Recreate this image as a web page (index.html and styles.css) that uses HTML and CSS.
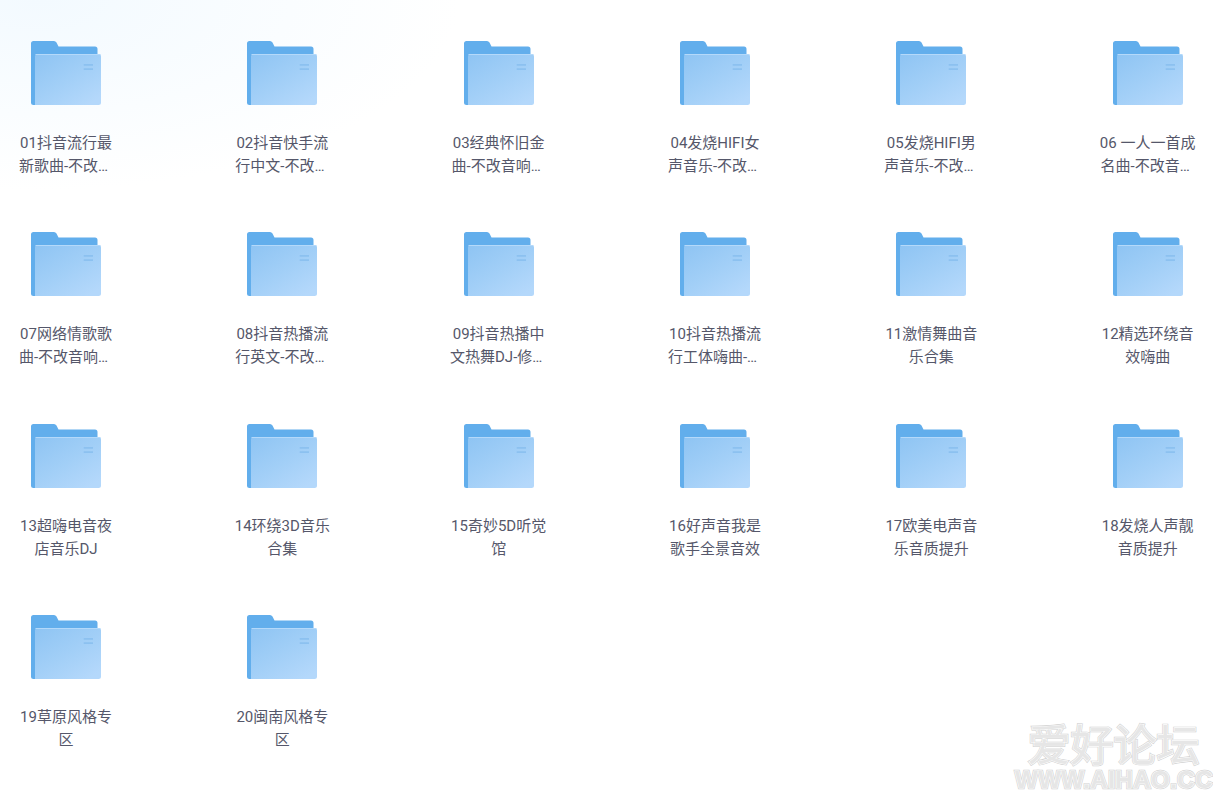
FILE: index.html
```html
<!DOCTYPE html>
<html lang="en">
<head>
    <meta charset="UTF-8">
    <meta name="viewport" content="width=device-width, initial-scale=1.0">
    <title>Folders</title>
    <link rel="stylesheet" href="styles.css">
</head>
<body>

    <svg class="defs" width="0" height="0">
        <defs>
            <linearGradient id="front-fill" x1="0" y1="0" x2="0.8" y2="1">
                <stop offset="0" stop-color="#8ec4f3"/>
                <stop offset="0.55" stop-color="#a2cff7"/>
                <stop offset="1" stop-color="#b4d8fb"/>
            </linearGradient>
            <symbol id="folder" viewBox="0 0 70 64">
                <path d="M2.500 0H23Q24.500 0 25.500 1.500L27.500 5.500H64Q66.500 5.500 66.500 8V20H4V64H2.500Q0 64 0 61.500V2.500Q0 0 2.500 0Z" fill="#62aeec"/>
                <path d="M4 64V15.500Q4 13 6.500 13H67.500Q70 13 70 15.500V61.500Q70 64 67.500 64Z" fill="url(#front-fill)"/>
                <path d="M4.500 13.500H69.500" stroke="#b4d9fa" stroke-width="1" fill="none"/>
                <path d="M52.700 23H62V24.800H52.700ZM52.700 27.200H62V29H52.700Z" fill="#8cc1f0"/>
            </symbol>
        </defs>
    </svg>

    <div class="file-grid">
        <div class="file-item">
            <svg class="folder-icon"><use href="#folder"/></svg>
            <p class="file-name">01抖音流行最新歌曲-不改音响设置</p>
        </div>
        <div class="file-item">
            <svg class="folder-icon"><use href="#folder"/></svg>
            <p class="file-name">02抖音快手流行中文-不改音响设置</p>
        </div>
        <div class="file-item">
            <svg class="folder-icon"><use href="#folder"/></svg>
            <p class="file-name">03经典怀旧金曲-不改音响设置</p>
        </div>
        <div class="file-item">
            <svg class="folder-icon"><use href="#folder"/></svg>
            <p class="file-name">04发烧HIFI女声音乐-不改音响设置</p>
        </div>
        <div class="file-item">
            <svg class="folder-icon"><use href="#folder"/></svg>
            <p class="file-name">05发烧HIFI男声音乐-不改音响设置</p>
        </div>
        <div class="file-item">
            <svg class="folder-icon"><use href="#folder"/></svg>
            <p class="file-name">06 一人一首成名曲-不改音响设置</p>
        </div>
        <div class="file-item">
            <svg class="folder-icon"><use href="#folder"/></svg>
            <p class="file-name">07网络情歌歌曲-不改音响设置</p>
        </div>
        <div class="file-item">
            <svg class="folder-icon"><use href="#folder"/></svg>
            <p class="file-name">08抖音热播流行英文-不改音响设置</p>
        </div>
        <div class="file-item">
            <svg class="folder-icon"><use href="#folder"/></svg>
            <p class="file-name">09抖音热播中文热舞DJ-修改音响设置</p>
        </div>
        <div class="file-item">
            <svg class="folder-icon"><use href="#folder"/></svg>
            <p class="file-name">10抖音热播流行工体嗨曲-不改音响设置</p>
        </div>
        <div class="file-item">
            <svg class="folder-icon"><use href="#folder"/></svg>
            <p class="file-name">11激情舞曲音乐合集</p>
        </div>
        <div class="file-item">
            <svg class="folder-icon"><use href="#folder"/></svg>
            <p class="file-name">12精选环绕音效嗨曲</p>
        </div>
        <div class="file-item">
            <svg class="folder-icon"><use href="#folder"/></svg>
            <p class="file-name">13超嗨电音夜店音乐DJ</p>
        </div>
        <div class="file-item">
            <svg class="folder-icon"><use href="#folder"/></svg>
            <p class="file-name">14环绕3D音乐合集</p>
        </div>
        <div class="file-item">
            <svg class="folder-icon"><use href="#folder"/></svg>
            <p class="file-name">15奇妙5D听觉馆</p>
        </div>
        <div class="file-item">
            <svg class="folder-icon"><use href="#folder"/></svg>
            <p class="file-name">16好声音我是歌手全景音效</p>
        </div>
        <div class="file-item">
            <svg class="folder-icon"><use href="#folder"/></svg>
            <p class="file-name">17欧美电声音乐音质提升</p>
        </div>
        <div class="file-item">
            <svg class="folder-icon"><use href="#folder"/></svg>
            <p class="file-name">18发烧人声靓音质提升</p>
        </div>
        <div class="file-item">
            <svg class="folder-icon"><use href="#folder"/></svg>
            <p class="file-name">19草原风格专区</p>
        </div>
        <div class="file-item">
            <svg class="folder-icon"><use href="#folder"/></svg>
            <p class="file-name">20闽南风格专区</p>
        </div>
    </div>

    <div class="watermark">
        <div class="watermark-cn" data-text="爱好论坛">爱好论坛</div>
        <div class="watermark-en" data-text="WWW.AIHAO.CC">WWW.AIHAO.CC</div>
    </div>

</body>
</html>
```

FILE: styles.css
```css
body {
    font-family: Roboto, "Noto Sans CJK SC", sans-serif;
    margin: 0;
    height: 794px;
    overflow: hidden;
    position: relative;
    color: #55576a;
    background-color: #fff;
    background-image: radial-gradient(ellipse 420px 190px at 40px 0, #f3faff 0%, #fafdff 60%, #fff 100%);
}

.defs {
    position: absolute;
}

.file-grid {
    display: grid;
    grid-template-columns: repeat(6, 100px);
    justify-content: space-between;
    grid-auto-rows: 191.300px;
    padding: 41px 15.300px 0 16px;
}

.file-item {
    display: flex;
    flex-direction: column;
    align-items: center;
}

.folder-icon {
    width: 70px;
    height: 64px;
    flex: none;
}

.file-name {
    width: 98px;
    margin: 27px 0 0 0;
    font-size: 15px;
    line-height: 23px;
    text-align: center;
    overflow: hidden;
    display: -webkit-box;
    -webkit-box-orient: vertical;
    -webkit-line-clamp: 2;
}

.watermark {
    position: absolute;
    right: 1px;
    bottom: 3px;
    width: 197px;
    text-align: center;
    color: #fff;
}

.watermark-cn,
.watermark-en {
    position: relative;
    -webkit-text-stroke: 2.500px #d2d2d2;
}

.watermark-cn::after,
.watermark-en::after {
    content: attr(data-text);
    position: absolute;
    left: 0;
    right: 0;
    top: 0;
    color: #e6e6e6;
    -webkit-text-stroke: 1.200px #fff;
    paint-order: stroke fill;
}

.watermark-cn {
    font-size: 43px;
    line-height: 46px;
    font-weight: 400;
}

.watermark-en {
    font-family: "Liberation Sans", sans-serif;
    font-size: 24px;
    line-height: 22px;
    font-weight: 700;
    letter-spacing: 0.5px;
}
```
